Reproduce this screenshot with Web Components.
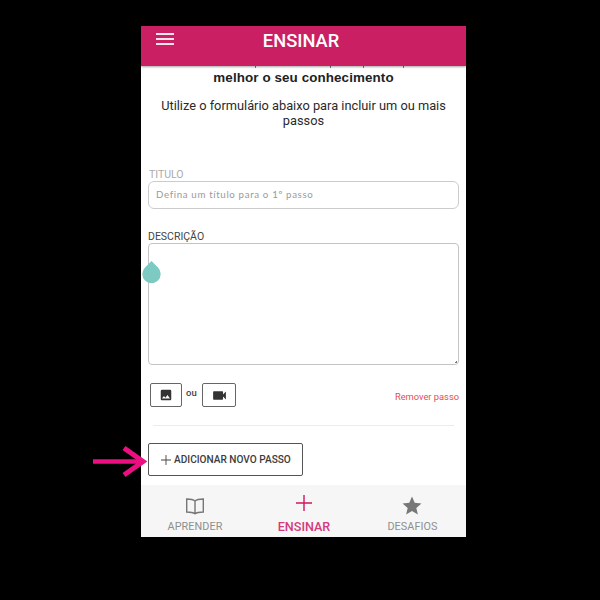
<!doctype html>
<html lang="pt-BR"><head><meta charset="utf-8"><title>Ensinar</title>
<style>
html,body{margin:0;padding:0;background:#000;height:600px;overflow:hidden;font-family:Roboto,"Liberation Sans",sans-serif}
</style></head><body>
<teach-screen>
  <app-header slot="header">ENSINAR</app-header>
  <step-form slot="main"></step-form>
  <bottom-nav slot="nav"></bottom-nav>
</teach-screen>
<script>
const def=(name,html)=>customElements.define(name,class extends HTMLElement{
  constructor(){super();this.attachShadow({mode:'open'}).innerHTML=html;}
});
def('teach-screen',`<style>
:host{display:block;position:relative;width:600px;height:600px;box-sizing:border-box;padding:26px 134px 63px 141px}
.phone{display:flex;flex-direction:column;height:511px;background:#fff;overflow:hidden}
.arrow{position:absolute;left:93px;top:446px}
</style>
<div class="phone"><slot name="header"></slot><slot name="main"></slot><slot name="nav"></slot></div>
<svg class="arrow" width="54" height="32" viewBox="0 0 54 32" fill="none" stroke="#ec0f82"><path d="M0 15.500H49" stroke-width="4.500"/><path d="M31 2L50 15.500L31 29" stroke-width="5"/></svg>`);
def('app-header',`<style>
:host{display:flex;flex:none;position:relative;z-index:2;height:40px;background:#cb1f63;box-shadow:0 1px 2px rgba(0,0,0,.35);color:#fff;justify-content:center;box-sizing:border-box;padding:4px 5px 0 0;font:500 18.300px/22px Roboto,sans-serif}
svg{position:absolute;left:15px;top:7px}
</style><svg width="18" height="12" viewBox="0 0 18 12" fill="#fbe3ec"><rect y="0" width="18" height="2"/><rect y="5" width="18" height="2"/><rect y="10" width="18" height="2"/></svg><slot></slot>`);
def('icon-button',`<style>
:host{display:flex;align-items:center;justify-content:center;box-sizing:border-box;height:24px;border:1px solid #666;border-radius:2px;background:#fff}
</style><slot></slot>`);
def('step-form',`<style>
:host{display:block;flex:1;min-height:0;position:relative;overflow:hidden;color:#222;font-family:Roboto,sans-serif}
.ticks{display:flex;height:2px;padding-left:114px}
.ticks i{width:1px;height:2px;background:#777}
h2{margin:2px 0 0;text-align:center;font:700 13.400px/16px "Liberation Sans",sans-serif;color:#222;letter-spacing:.1px}
p{margin:12px 10px 0;text-align:center;font:400 12.800px/15px Roboto,sans-serif;color:#2a2a2a}
.form{padding:0 7px}
label{display:block;font:400 10.500px/12px Roboto,sans-serif;margin:0 0 0 1px}
.t{margin-top:41px;color:#aaa}
.input{box-sizing:border-box;height:28px;border:1px solid #ccc;border-radius:6px;padding:0 7px;font:400 9.700px/25px Lato,sans-serif;letter-spacing:.65px;color:#9a9a9a}
.d{margin:22px 0 0;color:#444}
.area{position:relative;box-sizing:border-box;height:122px;border:1px solid #c4c4c4;border-radius:4px}
.area::after{content:"";position:absolute;right:1px;bottom:1px;width:3px;height:3px;background:linear-gradient(135deg,transparent 55%,#777 55%)}
.actions{display:flex;align-items:flex-start;margin:18px 0 0 2px}
.img{width:32px}.vid{width:34px}
.ou{margin:4px 3px 0 4px;width:13px;font:500 9.500px/12px Roboto,sans-serif;color:#444}
.rm{margin:8px 0 0 auto;font:400 9.300px/12px Roboto,sans-serif;color:#df4f52}
hr{margin:18px 5px 17px;border:0;border-top:1px solid #ececec}
.add{display:flex;align-items:center;box-sizing:border-box;width:155px;height:33px;border:1px solid #555;border-radius:2px;padding-left:11px;font:500 10.100px/12px Roboto,sans-serif;color:#3c3c3c}
.add svg{margin:0 3px 0 1px}
.drop{position:absolute;left:1px;top:194px}
</style>
<div class="ticks"><i></i><i style="margin-left:74px"></i><i style="margin-left:32px"></i><i style="margin-left:39px"></i></div>
<h2>melhor o seu conhecimento</h2>
<p>Utilize o formulário abaixo para incluir um ou mais passos</p>
<div class="form">
<label class="t">TITULO</label>
<div class="input">Defina um título para o 1º passo</div>
<label class="d">DESCRIÇÃO</label>
<div class="area"></div>
<div class="actions">
<icon-button class="img"><svg width="14" height="14" viewBox="0 0 24 24" fill="#333"><path d="M21 19V5a2 2 0 0 0-2-2H5a2 2 0 0 0-2 2v14a2 2 0 0 0 2 2h14a2 2 0 0 0 2-2zM8.500 13.500l2.500 3 3.500-4.500 4.500 6H5l3.500-4.500z"/></svg></icon-button>
<span class="ou">ou</span>
<icon-button class="vid"><svg width="17" height="17" viewBox="0 0 24 24" fill="#333"><path d="M17 10.500V7a1 1 0 0 0-1-1H4a1 1 0 0 0-1 1v10a1 1 0 0 0 1 1h12a1 1 0 0 0 1-1v-3.500l4 4v-11l-4 4z"/></svg></icon-button>
<span class="rm">Remover passo</span>
</div>
<hr>
<div class="add"><svg width="10" height="10" viewBox="0 0 11 11" fill="#444"><path d="M5 0h1v5h5v1H6v5H5V6H0V5h5z"/></svg>ADICIONAR NOVO PASSO</div>
</div>
<svg class="drop" width="19" height="23" viewBox="0 0 19 23"><path d="M9.500 1L3 7.500a9.200 9.200 0 1 0 13 0z" fill="#7ccac2"/></svg>`);
def('bottom-nav',`<style>
:host{display:grid;flex:none;grid-template-columns:108px 110px 107px;height:52px;background:#f6f6f6;font-family:Roboto,sans-serif}
div{display:flex;flex-direction:column;align-items:center;box-sizing:border-box;padding-top:8px;font:400 10.800px/12px Roboto,sans-serif;color:#8f8f8f;letter-spacing:.1px}
svg{display:block;height:24px;margin-bottom:4px}
.on{color:#d43a7d;font-weight:500;font-size:12.600px;letter-spacing:0}
.on svg{margin-top:-2px;margin-bottom:6px}
.s svg{transform:translateX(-1px)}
</style>
<div><svg width="24" height="24" viewBox="0 0 24 24" fill="none" stroke="#777" stroke-width="1.400"><path d="M12 8C10 6.200 7 6 3.700 6v13c3.300 0 6.300.2 8.300 1.800 2-1.600 5-1.800 8.300-1.800V6C17 6 14 6.200 12 8zM12 8v12.800"/></svg>APRENDER</div>
<div class="on"><svg width="24" height="24" viewBox="0 0 24 24" fill="#d0145f"><path d="M11.300 4h1.400v7.300H20v1.400h-7.300V20h-1.400v-7.300H4v-1.400h7.300z"/></svg>ENSINAR</div>
<div class="s"><svg width="24" height="24" viewBox="0 0 24 24" fill="#777"><path d="M12 3.500l2.700 6.300 6.800.6-5.200 4.500 1.600 6.700L12 18l-5.900 3.600 1.600-6.700-5.200-4.500 6.800-.6z"/></svg>DESAFIOS</div>`);
</script>
</body></html>
